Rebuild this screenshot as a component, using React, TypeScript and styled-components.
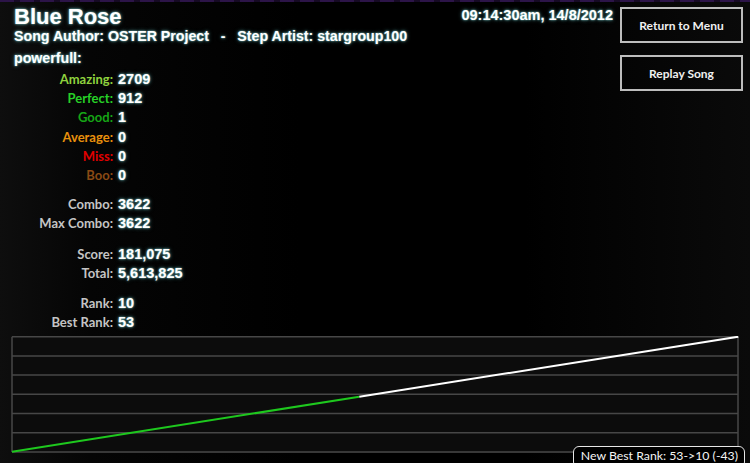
import React from "react";
import styled, { createGlobalStyle } from "styled-components";

const GlobalStyle = createGlobalStyle`
    html, body {
        margin: 0;
        padding: 0;
        background: #000;
    }
`;

const glow = "0 0 2px rgba(150, 230, 230, 0.9), 0 0 4px rgba(90, 180, 180, 0.6)";
const uiFont = `Lato, "Open Sans", sans-serif`;

const Page = styled.div`
    position: relative;
    width: 750px;
    height: 463px;
    overflow: hidden;
    box-sizing: border-box;
    display: flex;
    flex-direction: column;
    background: linear-gradient(to right, #0e0e0e 0%, #050505 12%, #000 40%, #000 70%, #0a0a0a 100%);
    color: #fff;
    font-family: "Liberation Sans", Arial, sans-serif;
`;

const TopStrip = styled.div`
    height: 2px;
    flex: none;
    background: repeating-linear-gradient(to right, #2c1448 0 14px, #160a24 14px 20px);
`;

const Top = styled.div`
    display: flex;
    flex-direction: row;
    align-items: flex-start;
`;

const LeftColumn = styled.div`
    flex: 1;
    padding-top: 4px;
`;

const Title = styled.h1`
    margin: 0;
    padding-left: 14px;
    font-size: 22px;
    line-height: 22px;
    font-weight: bold;
    text-shadow: ${glow};
`;

const SubTitle = styled.div`
    padding-left: 14px;
    font-size: 14.2px;
    line-height: 16px;
    font-weight: bold;
    white-space: pre;
    text-shadow: ${glow};
`;

const Difficulty = styled(SubTitle)`
    margin-top: 6px;
`;

const Stats = styled.div`
    margin-top: 4px;
    display: grid;
    grid-template-columns: 113px auto;
    column-gap: 5px;
    align-items: baseline;
`;

const Label = styled.div<{ $color?: string; $gap?: number }>`
    grid-column: 1;
    text-align: right;
    font-family: ${uiFont};
    font-size: 13px;
    font-weight: 700;
    line-height: 19.2px;
    color: ${({ $color }) => $color || "#c4c4c4"};
    margin-top: ${({ $gap }) => $gap || 0}px;
`;

const Value = styled.div<{ $gap?: number }>`
    grid-column: 2;
    font-size: 14.5px;
    font-weight: bold;
    line-height: 19.2px;
    text-shadow: ${glow};
    margin-top: ${({ $gap }) => $gap || 0}px;
`;

const DateText = styled.div`
    padding-top: 5px;
    margin-right: 7px;
    font-size: 14.5px;
    line-height: 17px;
    font-weight: bold;
    text-shadow: ${glow};
`;

const Buttons = styled.div`
    display: flex;
    flex-direction: column;
    gap: 12px;
    padding-top: 5px;
    margin-right: 7px;
`;

const MenuButton = styled.button`
    width: 123px;
    height: 36px;
    box-sizing: border-box;
    background: transparent;
    border: 2px solid #bdbdbd;
    color: #f0f0f0;
    font-family: ${uiFont};
    font-size: 12px;
    font-weight: 700;
    cursor: pointer;
`;

const ChartBox = styled.div`
    position: relative;
    margin: auto 11px 10px 11px;
    height: 117px;
    flex: none;
    background: #0c0c0c;
`;

const Badge = styled.div`
    position: absolute;
    right: -6px;
    top: 110px;
    height: 22px;
    box-sizing: border-box;
    padding: 1px 6px 0 7px;
    border: 1.5px solid #e6e6e6;
    border-radius: 6px;
    background: #000;
    color: #f4f4f4;
    font-family: ${uiFont};
    font-size: 12.3px;
    line-height: 15px;
    white-space: nowrap;
`;

type Stat = { label: string; value: string; color?: string; gap?: number };

const stats: Stat[] = [
    { label: "Amazing:", value: "2709", color: "#8fd23e" },
    { label: "Perfect:", value: "912", color: "#27d027" },
    { label: "Good:", value: "1", color: "#16a516" },
    { label: "Average:", value: "0", color: "#e8900c" },
    { label: "Miss:", value: "0", color: "#e00000" },
    { label: "Boo:", value: "0", color: "#8a4a14" },
    { label: "Combo:", value: "3622", gap: 10 },
    { label: "Max Combo:", value: "3622" },
    { label: "Score:", value: "181,075", gap: 11 },
    { label: "Total:", value: "5,613,825" },
    { label: "Rank:", value: "10", gap: 11 },
    { label: "Best Rank:", value: "53" },
];

const CHART_W = 728;
const CHART_H = 117;
const gridY = [0.7, 19.9, 39.1, 58.3, 77.5, 96.7, 115.9];

const RankChart: React.FC = () => (
    <svg width={CHART_W} height={CHART_H} viewBox={`0 0 ${CHART_W} ${CHART_H}`} style={{ display: "block" }}>
        {gridY.map((y) => (
            <line key={y} x1={1} x2={727} y1={y} y2={y} stroke="#474747" strokeWidth={1.5} />
        ))}
        <line x1={1} x2={1} y1={0.7} y2={115.9} stroke="#474747" strokeWidth={1.5} />
        <line x1={727} x2={727} y1={0.7} y2={115.9} stroke="#474747" strokeWidth={1.5} />
        <line x1={1} y1={115.7} x2={348.3} y2={60.7} stroke="#1ec81e" strokeWidth={2} />
        <line x1={348.3} y1={60.7} x2={727.3} y2={0.7} stroke="#ffffff" strokeWidth={2} />
    </svg>
);

const App: React.FC = () => {
    return (
        <Page>
            <GlobalStyle />
            <TopStrip />
            <Top>
                <LeftColumn>
                    <Title>Blue Rose</Title>
                    <SubTitle>{"Song Author: OSTER Project   -   Step Artist: stargroup100"}</SubTitle>
                    <Difficulty>powerfull:</Difficulty>
                    <Stats>
                        {stats.map((s) => (
                            <React.Fragment key={s.label}>
                                <Label $color={s.color} $gap={s.gap}>
                                    {s.label}
                                </Label>
                                <Value $gap={s.gap}>{s.value}</Value>
                            </React.Fragment>
                        ))}
                    </Stats>
                </LeftColumn>
                <DateText>09:14:30am, 14/8/2012</DateText>
                <Buttons>
                    <MenuButton>Return to Menu</MenuButton>
                    <MenuButton>Replay Song</MenuButton>
                </Buttons>
            </Top>
            <ChartBox>
                <RankChart />
                <Badge>New Best Rank: 53-&gt;10 (-43)</Badge>
            </ChartBox>
        </Page>
    );
};

export default App;
